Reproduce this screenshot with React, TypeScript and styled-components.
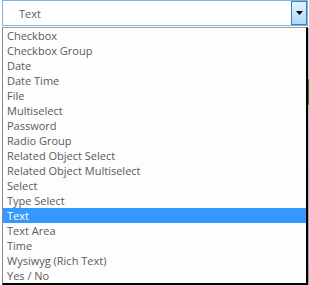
import React from "react";
import styled, { createGlobalStyle } from "styled-components";

const GlobalStyle = createGlobalStyle`
  html, body {
    margin: 0;
    padding: 0;
    background: #ffffff;
  }
  body {
    font-family: "Open Sans", "Liberation Sans", sans-serif;
  }
`;

const options = [
    "Checkbox",
    "Checkbox Group",
    "Date",
    "Date Time",
    "File",
    "Multiselect",
    "Password",
    "Radio Group",
    "Related Object Select",
    "Related Object Multiselect",
    "Select",
    "Type Select",
    "Text",
    "Text Area",
    "Time",
    "Wysiwyg (Rich Text)",
    "Yes / No",
];

const selected = "Text";

export default function App() {
    return <Page>
        <GlobalStyle/>
        <Field>
            <SelectBox>
                <Value>{selected}</Value>
                <ArrowButton>
                    <svg width="7" height="4" viewBox="0 0 7 4">
                        <path d="M0 0H7L3.5 4Z" fill="#000000"/>
                    </svg>
                </ArrowButton>
            </SelectBox>
            <Popup>
                {options.map(o => (
                    <Option key={o} $active={o === selected}>{o}</Option>
                ))}
            </Popup>
        </Field>
        <Backdrop/>
    </Page>;
}

const Page = styled.div`
    display: flex;
    width: 309px;
    height: 285px;
    padding-left: 2px;
    box-sizing: border-box;
    overflow: hidden;
`;

const Field = styled.div`
    display: flex;
    flex-direction: column;
    width: 306px;
    gap: 1px;
`;

const SelectBox = styled.div`
    display: flex;
    align-items: center;
    justify-content: space-between;
    height: 27px;
    box-sizing: border-box;
    border: 1px solid #7fb2e2;
    background: #ffffff;
    padding: 0 0 0 16px;
`;

const Value = styled.span`
    font-size: 11px;
    color: #5a5a5a;
    padding-top: 1px;
`;

const ArrowButton = styled.div`
    display: flex;
    align-items: center;
    justify-content: center;
    width: 16px;
    height: 24px;
    box-sizing: border-box;
    border: 1px solid #3d80b3;
    background: linear-gradient(180deg, #e6f3fc 0%, #c9e6fa 50%, #acd8f5 100%);
`;

const Popup = styled.div`
    display: flex;
    flex-direction: column;
    box-sizing: border-box;
    border-left: 1px solid #8a8a8a;
    border-top: 1px solid #a0a0a0;
    border-right: 2px solid #000000;
    border-bottom: 2px solid #000000;
    background: #fdfdfd;
`;

const Option = styled.div<{ $active?: boolean }>`
    height: 15px;
    line-height: 15px;
    padding-left: 4px;
    font-size: 11px;
    white-space: nowrap;
    color: ${p => p.$active ? "#ffffff" : "#5a5a5a"};
    background: ${p => p.$active ? "#3399ff" : "transparent"};
`;

const Backdrop = styled.div`
    width: 1px;
    margin-top: 28px;
    background: linear-gradient(180deg, #bdbdbd 0%, #bdbdbd 20%, #2e7d32 20%, #2e7d32 30%, #bdbdbd 30%, #9e9e9e 100%);
`;
